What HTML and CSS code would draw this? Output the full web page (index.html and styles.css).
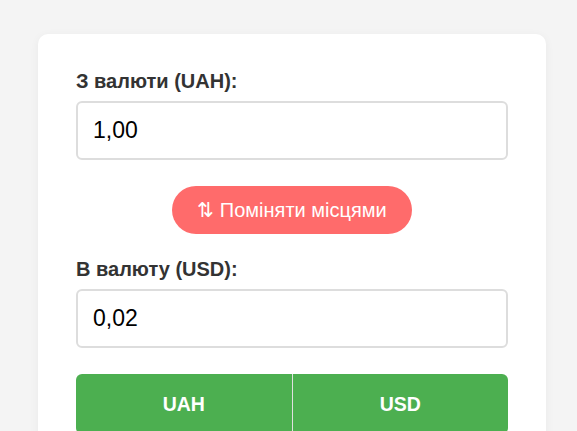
FILE: index.html
```html
<!DOCTYPE html>
<html lang="uk">
<head>
<meta charset="utf-8">
<link rel="stylesheet" href="styles.css">
</head>
<body>
<div class="card">
  <label class="label">З валюти (UAH):</label>
  <div class="field">1,00</div>
  <div class="swap-row"><button class="swap">⇅ Поміняти місцями</button></div>
  <label class="label">В валюту (USD):</label>
  <div class="field">0,02</div>
  <div class="tabs">
    <div class="tab">UAH</div>
    <div class="tab">USD</div>
  </div>
</div>
</body>
</html>
```
FILE: styles.css
```css
html, body {
  margin: 0;
  padding: 0;
  background: #f4f4f4;
  font-family: "Liberation Sans", Arial, sans-serif;
}
body {
  padding: 34px 31px 0 38px;
  height: 431px;
  box-sizing: border-box;
  overflow: hidden;
}
.card {
  background: #fff;
  border-radius: 10px;
  padding: 36px 38px 40px;
  box-shadow: 0 2px 10px rgba(0,0,0,0.05);
  display: flex;
  flex-direction: column;
}
.label {
  font-weight: bold;
  font-size: 20px;
  color: #333;
  line-height: 23px;
  margin-bottom: 8px;
}
.field {
  border: 2px solid #ddd;
  border-radius: 6px;
  height: 55px;
  padding: 0 15px;
  font-size: 23px;
  color: #000;
  display: flex;
  align-items: center;
}
.swap-row {
  display: flex;
  justify-content: center;
  margin: 26px 0 24px;
}
.swap {
  background: #ff6b6b;
  color: #fff;
  border: none;
  border-radius: 24px;
  height: 48px;
  padding: 0 25px;
  font-family: inherit;
  font-size: 20px;
}
.tabs {
  margin-top: 26px;
  display: flex;
  background: #4caf50;
  border-radius: 6px;
  height: 60px;
}
.tab {
  flex: 1;
  color: #fff;
  font-weight: bold;
  font-size: 19.5px;
  display: flex;
  align-items: center;
  justify-content: center;
}
.tab + .tab {
  border-left: 1px solid #e0e0e0;
}
```
